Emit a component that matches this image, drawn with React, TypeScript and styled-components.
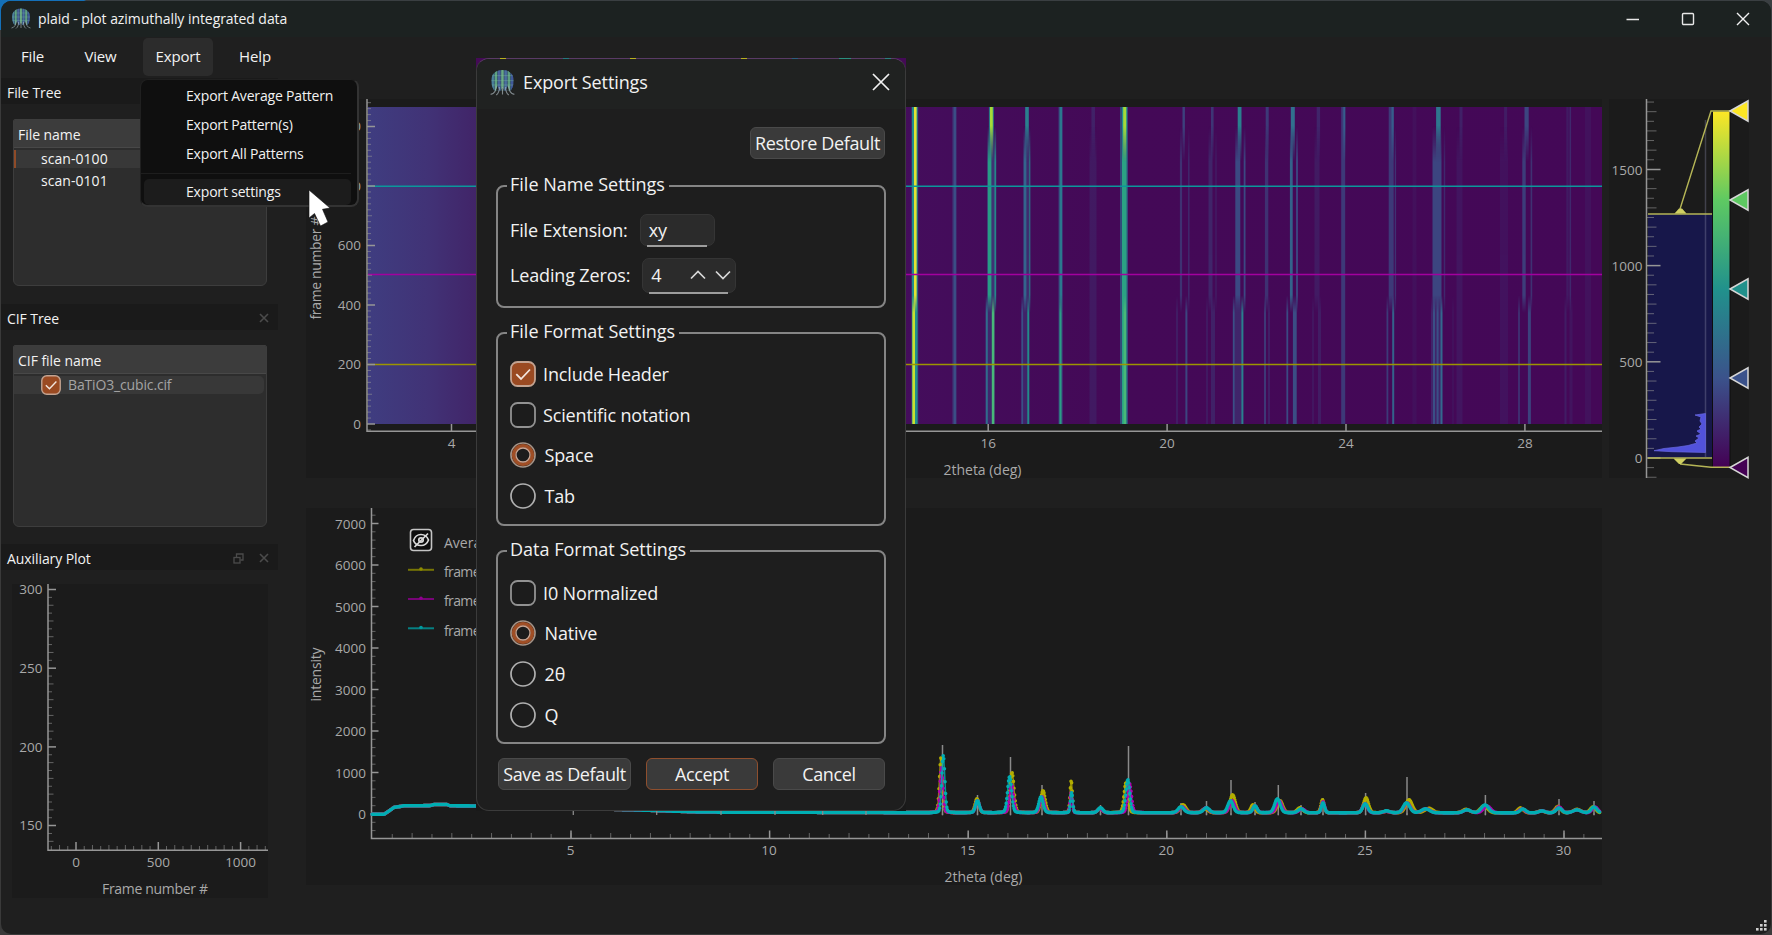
import React from "react";
import styled, { createGlobalStyle } from "styled-components";

const GlobalStyle = createGlobalStyle`
  *, *::before, *::after { box-sizing: border-box; }
  body { margin: 0; background: #0c0c0c; overflow: hidden; }
  button, input { font: inherit; color: inherit; margin: 0; }
`;

const FONT = '"Open Sans", "Noto Sans", "Liberation Sans", sans-serif';

/* ---------- window frame ---------- */

const Desktop = styled.div`
  width: 1772px;
  height: 935px;
  padding: 1px 1px 1px 1px;
  background: linear-gradient(90deg, #1470b8 0 84px, #3a3f42 86px 100%) top / 100% 30px no-repeat, #3a3a3a;
  font-family: ${FONT};
  font-size: 14px;
  color: #f2f2f2;
`;

const Window = styled.div`
  position: relative;
  width: 1770px;
  height: 933px;
  display: flex;
  flex-direction: column;
  background: #1f1f1f;
  border-radius: 10px;
  overflow: hidden;
`;

const TitleBar = styled.header`
  height: 36px;
  flex: none;
  display: flex;
  align-items: center;
  padding: 0 21px 1px 10px;
  background: #1c2221;
`;

const WindowTitle = styled.h1`
  margin: 0 auto 0 7px;
  padding-top: 1px;
  font-size: 14px;
  font-weight: 400;
  line-height: 20px;
  letter-spacing: -0.06px;
`;

const WindowControls = styled.div`
  display: flex;
  align-items: center;
  gap: 41px;
  svg { display: block; }
`;

const MenuBar = styled.nav`
  height: 41px;
  flex: none;
  display: flex;
  align-items: flex-start;
  padding: 1px 0 0 6px;
`;

const MenuButton = styled.button<{ $w: number; $open?: boolean }>`
  width: ${(p) => p.$w}px;
  height: 38px;
  border: 0;
  padding: 0 0 2px;
  border-radius: 5px;
  background: ${(p) => (p.$open ? "#2c2c2c" : "transparent")};
  font-size: 15px;
  letter-spacing: -0.15px;
`;

const Workspace = styled.main`
  flex: 1;
  display: flex;
  min-height: 0;
`;

/* ---------- dock column ---------- */

const Docks = styled.aside`
  width: 277px;
  flex: none;
  display: flex;
  flex-direction: column;
`;

const DockTitle = styled.div<{ $gap?: number }>`
  height: 26px;
  flex: none;
  margin-top: ${(p) => p.$gap ?? 0}px;
  display: flex;
  align-items: center;
  justify-content: space-between;
  padding: 2px 9px 0 6px;
  background: #1a1a1a;
  font-size: 14px;
  letter-spacing: -0.08px;
`;

const DockButtons = styled.span`
  display: flex;
  align-items: center;
  gap: 15px;
  color: #4b4b4b;
  svg { display: block; }
`;

const TreePanel = styled.div<{ $h: number }>`
  height: ${(p) => p.$h}px;
  flex: none;
  margin: 15px 0 0 12px;
  width: 254px;
  border: 1px solid #3d3d3d;
  border-radius: 2px 2px 6px 6px;
  background: #2d2d2d;
  overflow: hidden;
`;

const TreeHeader = styled.div`
  height: 28px;
  margin-bottom: 2px;
  padding: 0 4px;
  border-bottom: 1px solid #484848;
  background: #3c3c3c;
  line-height: 29px;
  font-size: 14px;
  letter-spacing: -0.05px;
`;

const TreeRow = styled.div<{ $selected?: boolean; $marker?: boolean; $muted?: boolean }>`
  height: 18px;
  margin: 0 2px 4px 0;
  display: flex;
  align-items: center;
  gap: 7px;
  padding: 0 0 2px 27px;
  border-radius: 0 5px 5px 0;
  box-shadow: ${(p) => (p.$marker ? "inset 2px 0 #8f4b28" : "none")};
  background: ${(p) => (p.$selected ? "#383838" : "transparent")};
  color: ${(p) => (p.$muted ? "#a4a4a4" : "#f4f4f4")};
  font-size: 14px;
  font-weight: ${(p) => (p.$muted ? 400 : 500)};
  letter-spacing: ${(p) => (p.$muted ? -0.15 : 0.05)}px;
  white-space: nowrap;
  svg { position: relative; top: 1px; }
`;

const AuxWrap = styled.div`
  margin: 14px 0 0 11px;
  height: 314px;
`;

const Plots = styled.section`
  width: 1296px;
  flex: none;
  margin-left: 28px;
  padding-top: 21px;
  display: flex;
  flex-direction: column;
  gap: 30px;
`;

const Histogram = styled.section`
  margin-left: 7px;
  padding-top: 21px;
`;

const Chart = styled.svg`
  display: block;
  overflow: visible;
  background: #1b1b1b;
  font-family: ${FONT};
`;

/* ---------- popup menu ---------- */

const Popup = styled.div`
  position: absolute;
  left: 139px;
  top: 78px;
  width: 219px;
  height: 128px;
  padding: 1px 6px 4px 3px;
  border-radius: 8px;
  border: 1px solid #202020;
  border-right: 2px solid #333;
  border-bottom: 2px solid #333;
  background: #0f0f0f;
`;

const PopupItem = styled.div<{ $active?: boolean }>`
  height: ${(p) => (p.$active ? 26 : 29)}px;
  padding: 0 0 ${(p) => (p.$active ? 2 : 0)}px 42px;
  display: flex;
  align-items: center;
  border-radius: 5px;
  background: ${(p) => (p.$active ? "#1c1c1c" : "transparent")};
  font-size: 14px;
  letter-spacing: -0.18px;
  white-space: nowrap;
`;

const PopupRule = styled.div`
  height: 1px;
  margin: 5px 0 5px -3px;
  background: #1e1e1e;
`;

const Pointer = styled.svg`
  position: absolute;
  left: 306px;
  top: 186px;
`;

const Grip = styled.svg`
  position: absolute;
  right: 3px;
  bottom: 2px;
`;

/* ---------- dialog ---------- */

const DialogBackdrop = styled.div`
  position: absolute;
  left: 475px;
  top: 57px;
  width: 430px;
  height: 753px;
  background: linear-gradient(#440a56 0 30px, #191919 60px);
`;

const EdgeGlints = styled.svg`
  position: absolute;
  left: 0;
  top: 0;
`;

const Dialog = styled.div`
  width: 430px;
  height: 753px;
  border: 1px solid #3b3b3b;
  border-top-color: #5a3a66;
  border-radius: 13px;
  background: #1e1e1e;
  overflow: hidden;
  font-size: 18px;
  letter-spacing: -0.15px;
`;

const DialogTitle = styled.header`
  height: 50px;
  display: flex;
  align-items: center;
  padding: 0 15px 4px 13px;
  background: #202221;
  svg { display: block; flex: none; }
`;

const DialogName = styled.h2`
  margin: 0 auto 0 8px;
  font-size: 18px;
  font-weight: 400;
  letter-spacing: -0.12px;
`;

const DialogBody = styled.div`
  padding: 18px 19px 0 19px;
`;

const Button = styled.button<{ $w: number; $primary?: boolean }>`
  width: ${(p) => p.$w}px;
  height: 32px;
  padding: 0 0 1px;
  display: flex;
  align-items: center;
  justify-content: center;
  border: 1.5px solid ${(p) => (p.$primary ? "#8f4f2e" : "#4a4a4a")};
  border-radius: 6px;
  background: #3a3a3a;
  font-size: 18px;
  letter-spacing: -0.36px;
  white-space: nowrap;
`;

const RestoreLine = styled.div`
  display: flex;
  justify-content: flex-end;
  padding-right: 1px;
  margin-bottom: 13px;
`;

const Group = styled.fieldset<{ $h: number }>`
  width: 390px;
  height: ${(p) => p.$h}px;
  margin: 0 0 11px;
  padding: 0 0 0 12px;
  border: 2px solid #858585;
  border-radius: 8px;
`;

const Legend = styled.legend`
  height: 28px;
  margin-left: -3px;
  padding: 0 4px 0 3px;
  line-height: 25px;
  letter-spacing: 0;
`;

const Stack = styled.div<{ $top: number }>`
  padding-top: ${(p) => p.$top}px;
`;

const Field = styled.div`
  height: 45.500px;
  display: flex;
  align-items: center;
`;

const TextInput = styled.div<{ $w: number; $h: number; $ml: number }>`
  position: relative;
  width: ${(p) => p.$w}px;
  height: ${(p) => p.$h}px;
  margin-left: ${(p) => p.$ml}px;
  padding: 0 4px 0 8px;
  display: flex;
  align-items: center;
  justify-content: space-between;
  border: 1px solid #353535;
  border-radius: 7px;
  background: #2b2b2b;
  &::after {
    content: "";
    position: absolute;
    left: 6px;
    right: 7px;
    bottom: -2px;
    height: 2px;
    background: #9d9d9d;
  }
`;

const Steppers = styled.span`
  display: flex;
  gap: 9px;
`;

const Option = styled.label<{ $round?: boolean }>`
  height: 40.6px;
  display: flex;
  align-items: center;
  gap: ${(p) => (p.$round ? 8.5 : 7)}px;
  svg { display: block; }
`;

const Buttons = styled.footer`
  display: flex;
  gap: 15px;
  padding: 3px 0 0 2px;
`;

/* ---------- icons ---------- */

const bars = ["#4b7f9c", "#5da27f", "#49629c", "#69a982", "#4a6da0", "#5b9c80", "#40579a"];

const PlaidIcon = ({ w, h, id }: { w: number; h: number; id: string }) => (
  <svg width={w} height={h} viewBox="0 0 20 21">
    <defs>
      <clipPath id={id}>
        <path d="M1 9C1 3.5 5 .5 10 .5S19 3.500 19 9c0 4-1.500 6.500-2.500 8h-13C2.500 15.500 1 13 1 9Z" />
      </clipPath>
    </defs>
    <g clipPath={`url(#${id})`}>
      <rect width="20" height="18" fill="#35536f" />
      {bars.map((c, i) => (
        <rect key={i} x={1.2 + i * 2.6} y="0" width="1.9" height="18" fill={c} />
      ))}
      <path d="M0 5h20M0 9h20M0 12.500h20" stroke="#7fc49b" strokeOpacity=".35" strokeWidth=".8" />
      <path d="M4 18L6 13.500L8 18ZM8.500 18L10 14L11.500 18ZM12 18L14 13.500L16 18Z" fill="#1f2322" />
    </g>
    <path
      d="M5 13c0 4-1.500 6.500-4.500 7M7.500 14c0 3-.5 5-2.500 6.500M10 14v6M12.500 14c0 3 .5 5 2.500 6.500M15 13c0 4 1.500 6.500 4.500 7"
      stroke="#a9b5ba"
      strokeOpacity=".7"
      strokeWidth=".9"
      fill="none"
    />
  </svg>
);

const Cross = ({ s, w }: { s: number; w: number }) => (
  <svg width={s} height={s} viewBox={`0 0 ${s} ${s}`}>
    <path d={`M1 1L${s - 1} ${s - 1}M${s - 1} 1L1 ${s - 1}`} stroke="currentColor" strokeWidth={w} fill="none" />
  </svg>
);

const FloatIcon = () => (
  <svg width="11" height="11" viewBox="0 0 11 11" fill="none" stroke="currentColor" strokeWidth="1.300">
    <rect x="1" y="4.500" width="6" height="5.500" />
    <path d="M3.500 4V1H10V7H7.500" />
  </svg>
);

const Check = ({ on, s = 26 }: { on?: boolean; s?: number }) => (
  <svg width={s} height={s} viewBox="0 0 26 26">
    <rect x="1" y="1" width="24" height="24" rx="6.500" fill={on ? "#9a4a22" : "#1c1c1c"} stroke={on ? "#c3a391" : "#929292"} strokeWidth="1.800" />
    {on && <path d="M6.300 13.200L11 18L20 8.500" fill="none" stroke="#f3e6df" strokeWidth="1.800" />}
  </svg>
);

const Radio = ({ on }: { on?: boolean }) => (
  <svg width="26" height="26" viewBox="0 0 26 26">
    <circle cx="13" cy="13" r="12" fill="#1c1c1c" stroke={on ? "#a69488" : "#b0b0b0"} strokeWidth="1.700" />
    {on && (
      <>
        <circle cx="13" cy="13" r="9.300" fill="none" stroke="#a04e25" strokeWidth="3.600" />
        <circle cx="13" cy="13" r="7" fill="none" stroke="#c9a593" strokeWidth="1.300" />
      </>
    )}
  </svg>
);

const Chevron = ({ up }: { up?: boolean }) => (
  <svg width="16" height="10" viewBox="0 0 16 10">
    <path d={up ? "M1 8.500L8 1.500L15 8.500" : "M1 1.500L8 8.500L15 1.500"} fill="none" stroke="#d8d8d8" strokeWidth="1.700" />
  </svg>
);

/* ---------- chart helpers ---------- */

const AXIS = "#969696";
const LABEL = "#a9a9a9";

type Tick = { at: number; len: number; strong?: boolean };

/* Ticks every `step` px around `origin`; index multiples choose the length. */
const makeTicks = (origin: number, step: number, lo: number, hi: number, major: number, medium: number, lens: number[]): Tick[] => {
  const out: Tick[] = [];
  for (let i = Math.ceil((lo - origin) / step); origin + i * step <= hi; i++) {
    const at = origin + i * step;
    if (major && i % major === 0) out.push({ at, len: lens[0], strong: true });
    else if (medium && i % medium === 0) out.push({ at, len: lens[1] });
    else out.push({ at, len: lens[2] });
  }
  return out;
};

const VTicks = ({ x, ticks }: { x: number; ticks: Tick[] }) => (
  <g stroke={AXIS}>
    {ticks.map((t, i) => (
      <line key={i} x1={x} x2={x + t.len} y1={t.at} y2={t.at} strokeWidth={t.strong ? 1.5 : 1} strokeOpacity={t.strong ? 1 : 0.6} />
    ))}
  </g>
);

const HTicks = ({ y, ticks }: { y: number; ticks: Tick[] }) => (
  <g stroke={AXIS}>
    {ticks.map((t, i) => (
      <line key={i} y1={y} y2={y - t.len} x1={t.at} x2={t.at} strokeWidth={t.strong ? 1.5 : 1} strokeOpacity={t.strong ? 1 : 0.6} />
    ))}
  </g>
);

const Label = ({ x, y, anchor = "middle", size = 13.5, w, children }: { x: number; y: number; anchor?: "start" | "middle" | "end"; size?: number; w?: number; children: React.ReactNode }) => (
  <text x={x} y={y + 4} textAnchor={anchor} fontSize={size} fill={LABEL} textLength={w}>
    {children}
  </text>
);

/* ---------- auxiliary plot ---------- */

const AuxPlot = () => (
  <Chart width="256" height="314" viewBox="12 583 256 314">
    <VTicks x={48} ticks={makeTicks(588.5, 7.87, 583, 848, 10, 2, [8, 5.5, 4])} />
    <HTicks y={849} ticks={makeTicks(76, 8.23, 49, 268, 10, 2, [8, 5, 4])} />
    <path d="M48 583V849.300H268" fill="none" stroke={AXIS} strokeWidth="1.500" />
    {[300, 250, 200, 150].map((v, i) => (
      <Label key={v} x={42.500} y={589.2 + i * 78.7} anchor="end">{v}</Label>
    ))}
    {[0, 500, 1000].map((v, i) => (
      <Label key={v} x={76 + i * 82.3} y={862}>{v}</Label>
    ))}
    <Label x={155} y={888.500} w={106} size={14}>Frame number #</Label>
  </Chart>
);

/* ---------- heat map ---------- */

type Streak = [number, number, number, number, string, number];
/* y from, y to, x centre, width, colour, opacity */
const T0 = 107, T1 = 144, T2 = 304, T3 = 424;
const TEAL = "#22908c", BLUE = "#3a5a8e", GREEN = "#48b878", LIME = "#a6da38", YEL = "#e4e233";

const streaks: Streak[] = [
  [T0, T3, 914.8, 7, "#2a6f8e", 0.45],
  [T0, T3, 914.8, 5.5, TEAL, 1], [T0, T2, 915.3, 2.6, YEL, 1], [T2, T3, 913.7, 2.6, "#c8e030", 1],
  [T0, T3, 954.5, 5, BLUE, 0.3], [T0, T3, 954.7, 2.5, BLUE, 0.8],
  [T0, T1, 991.4, 5, TEAL, 0.8], [T0, T1, 991.4, 2.8, LIME, 1],
  [T1, T2, 991.5, 9, BLUE, 0.5], [T1, T2, 989.6, 3.6, "#289c85", 1], [T1, T2, 995.3, 1.8, TEAL, 0.9],
  [T2, T3, 990, 9, BLUE, 0.35], [T2, T3, 986.8, 2, "#2f7390", 0.9], [T2, T3, 993.1, 2.6, GREEN, 1],
  [T0, T1, 1027, 3.6, "#2a7f8e", 1], [T1, T2, 1027, 7, BLUE, 0.4], [T1, T2, 1025, 2.8, "#34688f", 0.95], [T1, T2, 1029.6, 1.4, TEAL, 0.6],
  [T2, T3, 1025, 8, BLUE, 0.3], [T2, T3, 1022.3, 1.6, BLUE, 0.8], [T2, T3, 1028.3, 2, TEAL, 0.95],
  [T0, T3, 1060.6, 4.5, BLUE, 0.5], [T0, T2, 1060.8, 2.6, "#2a798e", 1], [T2, T3, 1060.5, 2.2, "#2a9d86", 1],
  [T0, T1, 1093.2, 3.5, BLUE, 0.3], [T1, T3, 1093, 7, BLUE, 0.2],
  [T0, T3, 1124, 8, "#2a6f8e", 0.65], [T0, T1, 1124.5, 5, TEAL, 1], [T1, T3, 1124.3, 4.6, "#2ba284", 1], [T0, T1, 1124.7, 3, LIME, 1], [T2, T3, 1124.8, 2.4, GREEN, 1],
  [T0, T1, 1183.7, 2.4, BLUE, 0.7], [T1, T2, 1181, 2.2, BLUE, 0.5], [T1, T2, 1188.8, 1.4, BLUE, 0.4], [T2, T3, 1177, 1.4, BLUE, 0.35], [T2, T3, 1186.4, 2, BLUE, 0.75],
  [T0, T1, 1212.3, 2.6, BLUE, 0.55], [T1, T2, 1210.5, 4, BLUE, 0.35], [T1, T2, 1216, 1.4, BLUE, 0.25], [T2, T3, 1207, 2, BLUE, 0.2], [T2, T3, 1213, 4, BLUE, 0.3],
  [T0, T1, 1239.6, 3.8, "#2a7f8e", 1], [T1, T2, 1237.8, 5, BLUE, 0.8], [T1, T2, 1244.6, 1.8, BLUE, 0.8],
  [T2, T3, 1237.5, 9, BLUE, 0.35], [T2, T3, 1233.7, 1.8, BLUE, 0.8], [T2, T3, 1242.4, 2, "#2a7f8e", 1],
  [T0, T1, 1267.2, 3, BLUE, 0.6], [T1, T2, 1266.6, 3.4, BLUE, 0.5], [T2, T3, 1265, 1.8, BLUE, 0.65], [T2, T3, 1269, 1.8, BLUE, 0.3],
  [T0, T1, 1292.8, 4, "#31708e", 1], [T1, T2, 1291.3, 2.8, "#33688e", 0.95], [T1, T2, 1297, 1.8, BLUE, 0.8], [T2, T3, 1287.3, 1.8, BLUE, 0.8], [T2, T3, 1294.8, 3.8, BLUE, 0.85],
  [T0, T1, 1318.4, 3.4, BLUE, 0.35], [T1, T2, 1317, 5, BLUE, 0.22], [T2, T3, 1313, 1.5, BLUE, 0.22], [T2, T3, 1319.5, 3, BLUE, 0.25],
  [T0, T1, 1344.3, 2, "#33688e", 0.95], [T0, T3, 1343.2, 4, BLUE, 0.6],
  [T0, T1, 1392.6, 2.2, "#33688e", 0.95], [T0, T2, 1391.2, 5, BLUE, 0.6], [T1, T2, 1395.4, 1.4, BLUE, 0.5], [T2, T3, 1387.4, 1.8, BLUE, 0.6], [T2, T3, 1393.2, 2, "#33688e", 0.95],
  [T0, T3, 1414.5, 4, BLUE, 0.1],
  [T0, T1, 1438.4, 4.6, "#2f768e", 1], [T1, T2, 1437, 9, BLUE, 0.75], [T1, T2, 1444.5, 1.4, BLUE, 0.4], [T2, T3, 1436.5, 11, BLUE, 0.35], [T2, T3, 1434, 2, BLUE, 0.8], [T2, T3, 1437.6, 2, BLUE, 0.8], [T2, T3, 1441.5, 2, "#33688e", 1],
  [T0, T1, 1461, 3, BLUE, 0.3], [T1, T3, 1459.5, 6, BLUE, 0.16], [T2, T3, 1453, 1.4, BLUE, 0.15],
  [T0, T1, 1505.6, 3, BLUE, 0.25], [T1, T3, 1504, 8, BLUE, 0.13],
  [T0, T1, 1526.6, 4.2, BLUE, 0.75], [T1, T2, 1524, 3.4, BLUE, 0.65], [T1, T2, 1531.4, 1.6, BLUE, 0.5], [T2, T3, 1519, 1.8, BLUE, 0.5], [T2, T3, 1529.4, 3, BLUE, 0.7],
  [T0, T2, 1567.5, 2.4, BLUE, 0.22], [T0, T2, 1570.3, 1.6, BLUE, 0.4], [T2, T3, 1565.5, 2, BLUE, 0.25], [T2, T3, 1571, 3, BLUE, 0.15],
  [T0, T3, 1588, 6, BLUE, 0.12],
];

/* Streaks fade into each other around the two phase transitions. */
const FADE: Record<number, number> = { [T0]: 0, [T1]: 18, [T2]: 9, [T3]: 0 };
const bands: [number, number][] = [[T0, T1], [T0, T2], [T1, T2], [T1, T3], [T2, T3], [T0, T3]];

const BandMask = ({ y0, y1 }: { y0: number; y1: number }) => {
  const a = y0 - FADE[y0], b = y1 + FADE[y1], h = b - a;
  return (
    <>
      <linearGradient id={`g${y0}-${y1}`} gradientUnits="userSpaceOnUse" x1="0" x2="0" y1={a} y2={b}>
        <stop offset="0" stopColor={FADE[y0] ? "#000" : "#fff"} />
        <stop offset={(2 * FADE[y0]) / h} stopColor="#fff" />
        <stop offset={1 - (2 * FADE[y1]) / h} stopColor="#fff" />
        <stop offset="1" stopColor={FADE[y1] ? "#000" : "#fff"} />
      </linearGradient>
      <mask id={`m${y0}-${y1}`} maskUnits="userSpaceOnUse" x="368" y={a} width="1234" height={h}>
        <rect x="368" y={a} width="1234" height={h} fill={`url(#g${y0}-${y1})`} />
      </mask>
    </>
  );
};

const HeatMap = () => (
  <Chart width="1296" height="379" viewBox="306 99 1296 379">
    <defs>
      <linearGradient id="heat" gradientUnits="userSpaceOnUse" x1="368" y1="0" x2="1602" y2="0">
        <stop offset="0" stopColor="#3f3d80" />
        <stop offset=".05" stopColor="#413276" />
        <stop offset=".088" stopColor="#412468" />
        <stop offset=".43" stopColor="#440d5c" />
        <stop offset=".6" stopColor="#440957" />
        <stop offset="1" stopColor="#440857" />
      </linearGradient>
      {bands.map(([a, b]) => (
        <BandMask key={`${a}-${b}`} y0={a} y1={b} />
      ))}
    </defs>
    <rect x="368" y="107" width="1234" height="317" fill="url(#heat)" />
    {streaks.map(([y0, y1, x, w, c, o], i) => (
      <rect key={i} x={x - w / 2} y={y0 - FADE[y0]} width={w} height={y1 + FADE[y1] - y0 + FADE[y0]} fill={c} opacity={o} mask={`url(#m${y0}-${y1})`} />
    ))}
    <line x1="368" x2="1602" y1="186.200" y2="186.200" stroke="#0b979b" strokeWidth="1.500" />
    <line x1="368" x2="1602" y1="274.500" y2="274.500" stroke="#a3009f" strokeWidth="1.500" />
    <line x1="368" x2="1602" y1="364.500" y2="364.500" stroke="#9c9500" strokeWidth="1.500" />
    <VTicks x={367} ticks={makeTicks(424, 5.95, 99, 430, 10, 5, [8, 5, 4])} />
    <HTicks y={431} ticks={makeTicks(451.5, 178.9, 368, 1602, 1, 1, [7, 0, 0])} />
    <path d="M367 99V431.300H1602" fill="none" stroke={AXIS} strokeWidth="1.500" />
    {[0, 200, 400, 600, 800, 1000].map((v, i) => (
      <Label key={v} x={361} y={424.800 - i * 59.5} anchor="end">{v}</Label>
    ))}
    {[4, 8, 12, 16, 20, 24, 28].map((v, i) => (
      <Label key={v} x={451.500 + i * 178.9} y={443.800}>{v}</Label>
    ))}
    <Label x={982.500} y={470.500} w={78} size={14}>2theta (deg)</Label>
    <g transform="translate(317 268) rotate(-90)">
      <Label x={0} y={0} w={103} size={14}>frame number #</Label>
    </g>
  </Chart>
);

/* ---------- pattern plot ---------- */

/* centre x, reference line top (0: none), then [x, top] for each of the three frames, half width */
type Peak = [number, number, [number, number], [number, number], [number, number], number];
const peaks: Peak[] = [
  [942.5, 745, [941, 758], [941.5, 768], [943.3, 756], 1.9],
  [977.5, 795, [977, 799], [977.5, 801], [977.5, 801], 2.4],
  [1010.5, 757, [1012, 773], [1011.5, 785], [1009.6, 777], 2.5],
  [1042, 785, [1043, 791], [1042, 797], [1041, 797], 2.7],
  [1071, 0, [1071.2, 781], [1071.2, 793], [1071.6, 793], 1.4],
  [1100.5, 805, [1100, 809], [1100, 809], [1100.5, 808], 3],
  [1128.5, 746, [1126, 783], [1129.5, 784], [1127.8, 780], 2.4],
  [1181, 803, [1183, 805], [1182, 807], [1181, 807], 3.6],
  [1206.5, 801, [1205, 809], [1206, 808], [1206.5, 808], 3.6],
  [1231, 780, [1232.6, 795], [1232, 801], [1230.5, 801], 3.3],
  [1255, 802, [1253, 805], [1255, 806], [1255, 806], 2.6],
  [1278.3, 785, [1280, 801], [1279, 801], [1277.4, 799], 3.4],
  [1301, 805, [1300, 808], [1302, 809], [1301, 809], 3.5],
  [1323, 798, [1322.500, 800], [1323, 802], [1323, 803], 2],
  [1365.600, 793, [1366, 798], [1365, 804], [1365.200, 804], 3.1],
  [1386.500, 0, [1386.500, 811.5], [1386.500, 811.5], [1386.500, 811], 4],
  [1407, 777, [1409, 800], [1407, 803], [1406.500, 803], 4],
  [1426.500, 0, [1429, 808.5], [1426, 809], [1425.500, 809], 5],
  [1466, 0, [1466, 809.5], [1467, 810], [1467, 810], 4.5],
  [1485.400, 795, [1484, 806], [1487, 806], [1485, 805], 4.5],
  [1522, 0, [1520.500, 808], [1522, 809], [1523, 809], 3.500],
  [1542, 0, [1541, 811], [1542, 811], [1542, 811], 4],
  [1559, 799, [1558, 806.5], [1559, 807], [1559, 808], 3.500],
  [1576.500, 0, [1577, 809.5], [1577, 810], [1577, 810], 5],
  [1594, 801, [1593, 807], [1595, 807], [1594, 807], 3.500],
];

const start: [number, number][] = [[372, 814.3], [384, 814.3], [389, 811], [394, 807.4], [400, 806.5], [404, 805.8], [430, 805.6], [434, 804.5], [447, 804.5], [450, 805.8], [476, 806], [560, 808], [640, 810], [700, 812], [900, 812.6], [1602, 813]];

const base = (x: number) => {
  for (let i = 1; i < start.length; i++) {
    const [x0, y0] = start[i - 1], [x1, y1] = start[i];
    if (x <= x1) return y0 + ((y1 - y0) * (x - x0)) / (x1 - x0);
  }
  return 813;
};

const sample = (k: 2 | 3 | 4): [number, number][] => {
  const pts: [number, number][] = [];
  for (let x = 372; x <= 1600; x += 0.6) {
    let y = base(x);
    for (const p of peaks) {
      const [c, top] = p[k];
      const d = (x - c) / p[5];
      if (Math.abs(d) < 6) y -= (813 - top) * (0.86 * Math.exp(-d * d / 1.3) + 0.14 / (1 + d * d));
    }
    pts.push([x, y]);
  }
  return pts;
};

const Trace = ({ k, color }: { k: 2 | 3 | 4; color: string }) => {
  const pts = sample(k);
  const line = pts.map((p) => `${p[0].toFixed(1)},${p[1].toFixed(1)}`).join(" ");
  const dots = pts.map((p) => `M${p[0].toFixed(1)} ${p[1].toFixed(1)}h.01`).join("");
  return (
    <g fill="none" stroke={color}>
      <polyline points={line} strokeWidth="1.500" strokeOpacity=".8" />
      <path d={dots} strokeWidth="3.600" strokeLinecap="round" />
    </g>
  );
};

const legend: [number, string][] = [[569.8, "#8f8c00"], [599, "#8f008f"], [628.3, "#009a9e"]];

const PatternPlot = () => (
  <Chart width="1296" height="377" viewBox="306 508 1296 377">
    <VTicks x={371.500} ticks={makeTicks(814, 8.3, 509, 837, 5, 0, [7, 4, 4])} />
    <HTicks y={838} ticks={makeTicks(372.4, 19.86, 374, 1602, 0, 2, [8, 5, 4])} />
    <HTicks y={838} ticks={makeTicks(571, 198.6, 400, 1602, 1, 1, [7.5, 0, 0])} />
    <path d="M371.500 508V838.500H1602" fill="none" stroke={AXIS} strokeWidth="1.500" />
    {[0, 1000, 2000, 3000, 4000, 5000, 6000, 7000].map((v, i) => (
      <Label key={v} x={366} y={815.300 - i * 41.5} anchor="end">{v}</Label>
    ))}
    {[5, 10, 15, 20, 25, 30].map((v, i) => (
      <Label key={v} x={570.500 + i * 198.6} y={850.800}>{v}</Label>
    ))}
    <Label x={983.500} y={878} w={78} size={14}>2theta (deg)</Label>
    <g transform="translate(317 674.500) rotate(-90)">
      <Label x={0} y={0} w={54} size={14}>intensity</Label>
    </g>
    <g stroke="#8a8a8a" strokeWidth="1.500">
      {peaks.filter((p) => p[1] > 0).map((p) => (
        <line key={p[0]} x1={p[0]} x2={p[0]} y1={p[1]} y2="815" />
      ))}
    </g>
    <Trace k={2} color="#b3ad00" />
    <Trace k={3} color="#b000b0" />
    <Trace k={4} color="#00aeb3" />
    <g stroke="#8a8a8a" strokeWidth="1.300">
      {[573.300, 656.700, 721, 775, 822.700, 866].map((x) => (
        <line key={x} x1={x} x2={x} y1="806" y2="815" />
      ))}
      {peaks.filter((p) => p[1] > 0).map((p) => (
        <line key={p[0]} x1={p[0]} x2={p[0]} y1="813" y2="815.500" strokeOpacity=".7" />
      ))}
    </g>
    <rect x="410.500" y="529.500" width="21" height="21" rx="3" fill="#0d0d0d" stroke="#c4c4c4" strokeWidth="1.600" />
    <g fill="none" stroke="#d9d9d9" strokeWidth="1.700">
      <path d="M413.500 540.500C415 536 418 534.500 421 534.500S427 536 428.500 540C427 544 424 545.500 421 545.500S415 544.500 413.500 540.500Z" />
      <path d="M414.500 547L428 533.500" />
      <circle cx="421" cy="540" r="2.200" />
    </g>
    <Label x={444} y={543.800} anchor="start" size={14}>Average</Label>
    {legend.map(([y, c], i) => (
      <g key={i}>
        <line x1="408" x2="434" y1={y} y2={y} stroke={c} strokeWidth="2" strokeOpacity=".8" />
        <circle cx="421" cy={y - 0.8} r="1.800" fill={c} />
        <Label x={444} y={y + 3.300} anchor="start" size={14} w={36.500}>frame</Label>
      </g>
    ))}
  </Chart>
);

/* ---------- colour scale ---------- */

const stops: [number, string][] = [[111, "#fde725"], [200, "#5ec962"], [289, "#21918c"], [378, "#3b528b"], [467.500, "#440154"]];

const ColorScale = () => (
  <Chart width="140" height="379" viewBox="1609 99 140 379">
    <defs>
      <linearGradient id="viridis" x1="0" y1="0" x2="0" y2="1">
        {stops.map(([, c], i) => (
          <stop key={c} offset={i * 0.25} stopColor={c} />
        ))}
      </linearGradient>
    </defs>
    <rect x="1648" y="214" width="64" height="244" fill="#17174a" />
    <line x1="1705.500" x2="1705.500" y1="120" y2="457" stroke="#8a8aa8" strokeOpacity=".35" strokeWidth="1.500" />
    <path d="M1705.500 413.500L1695 415L1701 417L1700 421L1702 424L1699 427L1701 429L1697 431L1701 434L1696 436L1699 438L1695 441L1697 443L1688 445.500L1678 447L1664 448.500L1654 450.700L1672 451.700L1705.500 452.500Z" fill="#5252dc" stroke="#6868e0" strokeWidth=".7" />
    <VTicks x={1646.500} ticks={makeTicks(458, 9.62, 99, 478, 10, 2, [14, 10, 7.5])} />
    <line x1="1646.500" x2="1646.500" y1="99" y2="478" stroke={AXIS} strokeWidth="1.500" />
    <rect x="1712.500" y="111" width="17.500" height="356.500" fill="url(#viridis)" stroke="#0e0e0e" />
    <g fill="none" stroke="#b5b556" strokeWidth="1.400">
      <path d="M1648 214H1712" />
      <path d="M1648 458H1712" />
      <path d="M1680 209L1711 111H1730" />
      <path d="M1680 464L1711 467.300H1730" />
    </g>
    <path d="M1674.500 213.500H1686.500L1682 208.500H1679ZM1673.500 458.500H1686.500L1681 464H1679Z" fill="#cfcf62" />
    {stops.map(([y, c]) => (
      <path key={c} d={`M1730 ${y}L1748 ${y - 10.200}V${y + 10.200}Z`} fill={c} stroke="#d6d6d6" strokeWidth="1.500" />
    ))}
    {[1500, 1000, 500, 0].map((v, i) => (
      <Label key={v} x={1642.500} y={170.800 + i * 96.1} anchor="end">{v}</Label>
    ))}
  </Chart>
);

/* ---------- app ---------- */

const glints: [number, string][] = [[27, "#b8b020"], [90, "#247a80"], [157, "#b8b020"], [268, "#b8b020"], [319, "#2d5f80"], [366, "#2a9080"], [372, "#2a9080"], [412, "#2a7f80"]];

export default function App() {
  return (
    <Desktop>
      <GlobalStyle />
      <Window>
        <TitleBar>
          <PlaidIcon w={20} h={21} id="dome-s" />
          <WindowTitle>plaid - plot azimuthally integrated data</WindowTitle>
          <WindowControls>
            <svg width="14" height="14"><path d="M.5 7.500H13" stroke="#e8e8e8" strokeWidth="1.300" /></svg>
            <svg width="14" height="14"><rect x="1.500" y="1.500" width="11" height="11" rx="1" fill="none" stroke="#e8e8e8" strokeWidth="1.400" /></svg>
            <Cross s={14} w={1.4} />
          </WindowControls>
        </TitleBar>
        <MenuBar>
          <MenuButton $w={51}>File</MenuButton>
          <MenuButton $w={85}>View</MenuButton>
          <MenuButton $w={70} $open>Export</MenuButton>
          <MenuButton $w={84}>Help</MenuButton>
        </MenuBar>
        <Workspace>
          <Docks>
            <DockTitle>File Tree</DockTitle>
            <TreePanel $h={167}>
              <TreeHeader>File name</TreeHeader>
              <TreeRow $selected $marker>scan-0100</TreeRow>
              <TreeRow>scan-0101</TreeRow>
            </TreePanel>
            <DockTitle $gap={18}>
              CIF Tree
              <DockButtons><Cross s={10} w={1.6} /></DockButtons>
            </DockTitle>
            <TreePanel $h={182}>
              <TreeHeader>CIF file name</TreeHeader>
              <TreeRow $selected $muted><Check on s={20} />BaTiO3_cubic.cif</TreeRow>
            </TreePanel>
            <DockTitle $gap={17}>
              Auxiliary Plot
              <DockButtons><FloatIcon /><Cross s={10} w={1.6} /></DockButtons>
            </DockTitle>
            <AuxWrap><AuxPlot /></AuxWrap>
          </Docks>
          <Plots>
            <HeatMap />
            <PatternPlot />
          </Plots>
          <Histogram><ColorScale /></Histogram>
        </Workspace>

        <Popup>
          <PopupItem>Export Average Pattern</PopupItem>
          <PopupItem>Export Pattern(s)</PopupItem>
          <PopupItem>Export All Patterns</PopupItem>
          <PopupRule />
          <PopupItem $active>Export settings</PopupItem>
        </Popup>
        <Pointer width="28" height="44" viewBox="307 187 28 44">
          <path d="M309 190L330 208L322.500 209.300L328 222L320.500 226L314.500 213.500L309 218Z" fill="#fff" stroke="#111" strokeWidth=".6" />
        </Pointer>

        <DialogBackdrop>
          <Dialog>
            <DialogTitle>
              <PlaidIcon w={25} h={27} id="dome-l" />
              <DialogName>Export Settings</DialogName>
              <Cross s={18} w={1.7} />
            </DialogTitle>
            <DialogBody>
              <RestoreLine><Button $w={135}>Restore Default</Button></RestoreLine>
              <Group $h={136}>
                <Legend>File Name Settings</Legend>
                <Stack $top={7}>
                  <Field>
                    File Extension:
                    <TextInput $w={75} $h={32} $ml={12}>xy</TextInput>
                  </Field>
                  <Field>
                    Leading Zeros:
                    <TextInput $w={94} $h={35} $ml={12}>
                      4
                      <Steppers><Chevron up /><Chevron /></Steppers>
                    </TextInput>
                  </Field>
                </Stack>
              </Group>
              <Group $h={207}>
                <Legend>File Format Settings</Legend>
                <Stack $top={7}>
                  <Option><Check on />Include Header</Option>
                  <Option><Check />Scientific notation</Option>
                  <Option $round><Radio on />Space</Option>
                  <Option $round><Radio />Tab</Option>
                </Stack>
              </Group>
              <Group $h={207}>
                <Legend>Data Format Settings</Legend>
                <Stack $top={7.5}>
                  <Option><Check />I0 Normalized</Option>
                  <Option $round><Radio on />Native</Option>
                  <Option $round><Radio />2θ</Option>
                  <Option $round><Radio />Q</Option>
                </Stack>
              </Group>
              <Buttons>
                <Button $w={133}>Save as Default</Button>
                <Button $w={112} $primary>Accept</Button>
                <Button $w={112}>Cancel</Button>
              </Buttons>
            </DialogBody>
          </Dialog>
          <EdgeGlints width="430" height="1">
            {glints.map(([x, c]) => (
              <rect key={x} x={x - 3} y="0" width="6" height="1" fill={c} />
            ))}
          </EdgeGlints>
        </DialogBackdrop>
        <Grip width="12" height="12" viewBox="0 0 12 12" fill="#d0d0d0">
          {[[8, 0], [4, 4], [8, 4], [0, 8], [4, 8], [8, 8]].map(([x, y]) => (
            <rect key={`${x}-${y}`} x={x} y={y} width="2.600" height="2.600" />
          ))}
        </Grip>
      </Window>
    </Desktop>
  );
}
